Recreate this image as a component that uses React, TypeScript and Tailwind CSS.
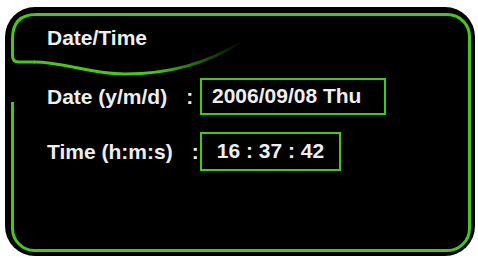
const GREEN = "#47c71d";

function Frame() {
  return (
    <svg className="absolute inset-0 pointer-events-none" width="470" height="249" viewBox="0 0 470 249" fill="none">
      <defs>
        <linearGradient id="fade" gradientUnits="userSpaceOnUse" x1="150" y1="0" x2="236" y2="0">
          <stop offset="0" stopColor={GREEN} stopOpacity="1" />
          <stop offset="1" stopColor={GREEN} stopOpacity="0" />
        </linearGradient>
      </defs>
      <path
        d="M7.5 95 V221.5 A22 22 0 0 0 29.5 243.5 H442.5 A22 22 0 0 0 464.5 221.5 V29.5 A22 22 0 0 0 442.5 7.5 H31 Q7.5 7.5 7.5 32 V49 Q7.5 55 14 55 H30"
        stroke={GREEN}
        strokeWidth="3"
      />
      <path d="M29 55 C60 55 85 67 120 67 C165 67 205 55 236 35" stroke="url(#fade)" strokeWidth="3" />
    </svg>
  );
}

function Row({ label, value, boxClass, mt }: { label: string; value: string; boxClass: string; mt: string }) {
  return (
    <div className={`flex items-center ${mt}`}>
      <div className="flex w-[153px] items-center">
        <span>{label}</span>
        <span className="ml-[19px]">:</span>
      </div>
      <div className={`flex items-center border-2 border-[#47c71d] pb-[2px] ${boxClass}`}>{value}</div>
    </div>
  );
}

export default function App() {
  return (
    <div className="w-[478px] h-[259px] bg-white pt-[7px] pl-[5px]">
      <div
        className="relative w-[470px] h-[249px] rounded-[30px] bg-black pl-[42px] pt-[20px] text-[21px] leading-[21px] font-bold text-[#eeeeee]"
        style={{ fontFamily: '"Liberation Sans", Arial, sans-serif' }}
      >
        <Frame />
        <div>Date/Time</div>
        <Row label="Date (y/m/d)" value="2006/09/08 Thu" boxClass="w-[186px] h-[37px] pl-[10px]" mt="mt-[30px]" />
        <Row label="Time (h:m:s)" value="16 : 37 : 42" boxClass="w-[141px] h-[39px] justify-center" mt="mt-[17px]" />
      </div>
    </div>
  );
}
